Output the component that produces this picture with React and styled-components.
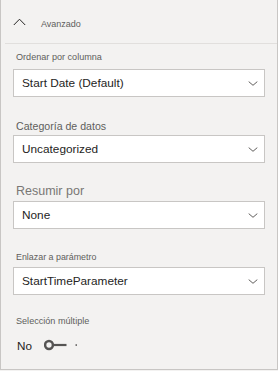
import React from "react";
import styled, { createGlobalStyle } from "styled-components";

const Global = createGlobalStyle`
  html, body { margin: 0; padding: 0; background: #f3f2f1; }
  body { font-family: "Liberation Sans", Arial, sans-serif; }
`;

const Panel = styled.div`
  box-sizing: border-box;
  width: 278px;
  height: 370px;
  background: #f3f2f1;
  border: 1px solid #c8c6c4;
  border-top: none;
  display: flex;
  flex-direction: column;
`;

const Header = styled.div`
  box-sizing: border-box;
  height: 44px;
  margin-left: 4px;
  padding-left: 8px;
  border-bottom: 1px solid #e1dfdd;
  display: flex;
  align-items: center;
  gap: 15px;
`;

const HeaderTitle = styled.span`
  font-size: 9px;
  color: #605e5c;
  line-height: 12px;
  margin-top: 5px;
`;

const Content = styled.div`
  padding: 0 12px;
  display: flex;
  flex-direction: column;
`;

const Field = styled.div`
  display: grid;
  grid-template-rows: ${(p) => p.$top}px 28px;
`;

const Label = styled.label`
  align-self: end;
  padding-left: 3px;
  font-size: ${(p) => p.$size}px;
  line-height: ${(p) => p.$lh}px;
  margin-bottom: ${(p) => p.$mb}px;
  color: ${(p) => p.$color || "#605e5c"};
`;

const Select = styled.div`
  box-sizing: border-box;
  height: 28px;
  background: #ffffff;
  border: 1px solid #c8c6c4;
  display: flex;
  align-items: center;
  justify-content: space-between;
  padding: 0 6px 0 8px;
  font-size: 11.8px;
  color: #252423;
`;

const ToggleSection = styled.div`
  display: grid;
  grid-template-rows: auto auto;
  padding-top: 19px;
`;

const ToggleRow = styled.div`
  display: flex;
  align-items: center;
  height: 20px;
  margin-top: 7px;
  padding-left: 4px;
  gap: 12px;
`;

const ToggleText = styled.span`
  font-size: 11.7px;
  color: #252423;
`;

const ChevronUp = () => (
  <svg width="13" height="8" viewBox="0 0 13 8">
    <path d="M0.8 7 L6.5 1.2 L12.2 7" fill="none" stroke="#252423" strokeWidth="1" />
  </svg>
);

const ChevronDown = () => (
  <svg width="10" height="5" viewBox="0 0 10 5">
    <path d="M0.7 0.6 L5 4.3 L9.3 0.6" fill="none" stroke="#605e5c" strokeWidth="1" />
  </svg>
);

const ToggleIcon = () => (
  <svg width="36" height="12" viewBox="0 0 36 12">
    <circle cx="5" cy="6" r="3.9" fill="none" stroke="#555453" strokeWidth="2.5" />
    <line x1="8.5" y1="6" x2="22.5" y2="6" stroke="#555453" strokeWidth="2.2" />
    <rect x="31.5" y="5.3" width="1.5" height="1.5" fill="#555453" />
  </svg>
);

const fields = [
  { label: "Ordenar por columna", value: "Start Date (Default)", top: 25, size: 9.1, lh: 14, mb: 5 },
  { label: "Categoría de datos", value: "Uncategorized", top: 38, size: 10.6, lh: 14, mb: 2 },
  { label: "Resumir por", value: "None", top: 38, size: 12.5, lh: 16, mb: 2, color: "#797775" },
  { label: "Enlazar a parámetro", value: "StartTimeParameter", top: 38, size: 8.9, lh: 14, mb: 3 },
];

export default function App() {
  return (
    <>
      <Global />
      <Panel>
        <Header>
          <ChevronUp />
          <HeaderTitle>Avanzado</HeaderTitle>
        </Header>
        <Content>
          {fields.map((f) => (
            <Field key={f.label} $top={f.top}>
              <Label $size={f.size} $lh={f.lh} $mb={f.mb} $color={f.color}>
                {f.label}
              </Label>
              <Select>
                <span>{f.value}</span>
                <ChevronDown />
              </Select>
            </Field>
          ))}
          <ToggleSection>
            <Label $size={9.1} $lh={14} $mb={0}>Selección múltiple</Label>
            <ToggleRow>
              <ToggleText>No</ToggleText>
              <ToggleIcon />
            </ToggleRow>
          </ToggleSection>
        </Content>
      </Panel>
    </>
  );
}
